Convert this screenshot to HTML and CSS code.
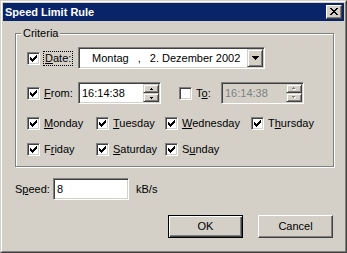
FILE: index.html
```html
<!DOCTYPE html>
<html>
<head>
<meta charset="utf-8">
<title>Speed Limit Rule</title>
<link rel="stylesheet" href="styles.css">
</head>
<body>
<div class="window">
  <div class="frame">
    <div class="titlebar">
      <span class="title">Speed Limit Rule</span>
      <span class="close"><svg class="xglyph" width="8" height="7" viewBox="0 0 8 7"><path d="M0 0h2v1h-2z M6 0h2v1h-2z M1 1h2v1h-2z M5 1h2v1h-2z M2 2h4v1h-4z M3 3h2v1h-2z M2 4h4v1h-4z M1 5h2v1h-2z M5 5h2v1h-2z M0 6h2v1h-2z M6 6h2v1h-2z"/></svg></span>
    </div>
    <div class="body">
      <div class="group">
        <span class="legend">Criteria</span>
        <div class="row">
          <div class="opt opt-label">
            <span class="box"><svg class="check" width="7" height="7" viewBox="0 0 7 7"><path d="M0 2V5H1V6H2V7H3V6H4V5H5V4H6V3H7V0H6V1H5V2H4V3H3V4H2V3H1V2Z"/></svg></span>
            <span class="lbl focus"><u>D</u>ate:</span>
          </div>
          <div class="combo">
            <span class="combo-text"><span>Montag</span><span class="comma">,</span><span class="date">2. Dezember 2002</span></span>
            <span class="raised drop"><svg width="7" height="4" viewBox="0 0 7 4"><path d="M0 0h7v1h-7z M1 1h5v1h-5z M2 2h3v1h-3z M3 3h1v1h-1z"/></svg></span>
          </div>
        </div>
        <div class="row row-time">
          <div class="opt opt-label">
            <span class="box"><svg class="check" width="7" height="7" viewBox="0 0 7 7"><path d="M0 2V5H1V6H2V7H3V6H4V5H5V4H6V3H7V0H6V1H5V2H4V3H3V4H2V3H1V2Z"/></svg></span>
            <span class="lbl"><u>F</u>rom:</span>
          </div>
          <div class="field time">
            <span class="val">16:14:38</span>
            <span class="spin">
              <span class="raised sb"><svg width="3" height="2" viewBox="0 0 3 2"><path d="M1 0h1v1h-1z M0 1h3v1h-3z"/></svg></span>
              <span class="raised sb"><svg width="3" height="2" viewBox="0 0 3 2"><path d="M0 0h3v1h-3z M1 1h1v1h-1z"/></svg></span>
            </span>
          </div>
          <div class="opt opt-to">
            <span class="box"></span>
            <span class="lbl">T<u>o</u>:</span>
          </div>
          <div class="field time disabled">
            <span class="val">16:14:38</span>
            <span class="spin">
              <span class="raised sb"><svg width="4" height="3" viewBox="0 0 4 3"><path class="hl" d="M2 1h1v1h-1z M1 2h3v1h-3z"/><path class="sh" d="M1 0h1v1h-1z M0 1h3v1h-3z"/></svg></span>
              <span class="raised sb"><svg width="4" height="3" viewBox="0 0 4 3"><path class="hl" d="M1 1h3v1h-3z M2 2h1v1h-1z"/><path class="sh" d="M0 0h3v1h-3z M1 1h1v1h-1z"/></svg></span>
            </span>
          </div>
        </div>
        <div class="days">
          <div class="opt"><span class="box"><svg class="check" width="7" height="7" viewBox="0 0 7 7"><path d="M0 2V5H1V6H2V7H3V6H4V5H5V4H6V3H7V0H6V1H5V2H4V3H3V4H2V3H1V2Z"/></svg></span><span class="lbl"><u>M</u>onday</span></div>
          <div class="opt"><span class="box"><svg class="check" width="7" height="7" viewBox="0 0 7 7"><path d="M0 2V5H1V6H2V7H3V6H4V5H5V4H6V3H7V0H6V1H5V2H4V3H3V4H2V3H1V2Z"/></svg></span><span class="lbl"><u>T</u>uesday</span></div>
          <div class="opt"><span class="box"><svg class="check" width="7" height="7" viewBox="0 0 7 7"><path d="M0 2V5H1V6H2V7H3V6H4V5H5V4H6V3H7V0H6V1H5V2H4V3H3V4H2V3H1V2Z"/></svg></span><span class="lbl"><u>W</u>ednesday</span></div>
          <div class="opt"><span class="box"><svg class="check" width="7" height="7" viewBox="0 0 7 7"><path d="M0 2V5H1V6H2V7H3V6H4V5H5V4H6V3H7V0H6V1H5V2H4V3H3V4H2V3H1V2Z"/></svg></span><span class="lbl">T<u>h</u>ursday</span></div>
          <div class="opt"><span class="box"><svg class="check" width="7" height="7" viewBox="0 0 7 7"><path d="M0 2V5H1V6H2V7H3V6H4V5H5V4H6V3H7V0H6V1H5V2H4V3H3V4H2V3H1V2Z"/></svg></span><span class="lbl">F<u>r</u>iday</span></div>
          <div class="opt"><span class="box"><svg class="check" width="7" height="7" viewBox="0 0 7 7"><path d="M0 2V5H1V6H2V7H3V6H4V5H5V4H6V3H7V0H6V1H5V2H4V3H3V4H2V3H1V2Z"/></svg></span><span class="lbl"><u>S</u>aturday</span></div>
          <div class="opt"><span class="box"><svg class="check" width="7" height="7" viewBox="0 0 7 7"><path d="M0 2V5H1V6H2V7H3V6H4V5H5V4H6V3H7V0H6V1H5V2H4V3H3V4H2V3H1V2Z"/></svg></span><span class="lbl">S<u>u</u>nday</span></div>
        </div>
      </div>
      <div class="speed-row">
        <span class="speed-lbl">S<u>p</u>eed:</span>
        <div class="field speed"><span>8</span></div>
        <span class="unit">kB/s</span>
      </div>
      <div class="buttons">
        <button class="btn default">OK</button>
        <button class="btn">Cancel</button>
      </div>
    </div>
  </div>
</div>
</body>
</html>
```
FILE: styles.css
```css
* { box-sizing: border-box; }
html, body { margin: 0; padding: 0; }
body {
  background: #D4D0C8;
  font-family: "Liberation Sans", Arial, sans-serif;
  font-size: 11px;
  line-height: 13px;
  color: #000;
  width: 347px;
  height: 253px;
  overflow: hidden;
}
svg { display: block; shape-rendering: crispEdges; }
svg path { fill: #000; }
u { text-decoration: underline; text-underline-offset: 1px; }

.window {
  width: 347px;
  height: 253px;
  border: 1px solid;
  border-color: #D4D0C8 #404040 #404040 #D4D0C8;
}
.frame {
  height: 100%;
  border: 1px solid;
  border-color: #fff #808080 #808080 #fff;
  padding: 1px;
  display: flex;
  flex-direction: column;
}
.titlebar {
  flex: none;
  height: 18px;
  background: #0A246A;
  display: flex;
  align-items: center;
  justify-content: space-between;
  padding: 0 2px;
}
.title { color: #fff; font-weight: bold; }
.close {
  width: 16px;
  height: 14px;
  background: #D4D0C8;
  border: 1px solid;
  border-color: #fff #404040 #404040 #fff;
  box-shadow: inset -1px -1px #808080;
  padding: 2px 0 0 3px;
}

.body {
  flex: 1;
  padding: 12px 10px 0 12px;
  display: flex;
  flex-direction: column;
}

.group {
  position: relative;
  border: 1px solid #808080;
  box-shadow: inset 1px 1px #fff, 1px 1px #fff;
  padding: 13px 0 10px 11px;
}
.legend {
  position: absolute;
  left: 5px;
  top: -7px;
  padding: 0 2px;
  background: #D4D0C8;
}

.row { display: flex; align-items: center; height: 22px; }
.row-time { margin-top: 13px; }
.opt { display: flex; align-items: center; height: 13px; }
.opt-label { width: 51px; }
.opt-to { width: 42px; margin-left: 18px; }

.box {
  flex: none;
  width: 13px;
  height: 13px;
  background: #fff;
  border: 1px solid;
  border-color: #808080 #fff #fff #808080;
  box-shadow: inset 1px 1px #404040, inset -1px -1px #D4D0C8;
  padding: 2px;
}
.lbl { margin-left: 4px; white-space: nowrap; }
.lbl.focus { margin-left: 3px; border: 1px dotted #000; padding: 0 1px; }

.field, .combo {
  background: #fff;
  border: 1px solid;
  border-color: #808080 #fff #fff #808080;
  box-shadow: inset 1px 1px #404040, inset -1px -1px #D4D0C8;
  height: 22px;
}
.raised {
  background: #D4D0C8;
  border: 1px solid;
  border-color: #D4D0C8 #404040 #404040 #D4D0C8;
  box-shadow: inset 1px 1px #fff, inset -1px -1px #808080;
  display: flex;
  align-items: center;
  justify-content: center;
}

.combo {
  width: 187px;
  padding: 1px;
  display: flex;
  align-items: center;
  justify-content: space-between;
}
.combo-text { padding-left: 12px; white-space: nowrap; display: flex; }
.comma { margin-left: 9px; }
.date { margin-left: 9px; }
.drop { width: 16px; height: 18px; }

.time {
  width: 83px;
  padding: 1px;
  display: flex;
  align-items: center;
  justify-content: space-between;
}
.val { padding-left: 2px; }
.spin { width: 16px; height: 18px; display: flex; flex-direction: column; }
.sb { flex: 1; }
.disabled { background: #D4D0C8; color: #808080; }
.disabled svg .sh { fill: #808080; }
.disabled svg .hl { fill: #fff; }

.days {
  display: grid;
  grid-template-columns: 69px 69px 86px auto;
  row-gap: 13px;
  margin-top: 13px;
}

.speed-row {
  margin-top: 11px;
  display: flex;
  align-items: center;
  height: 22px;
}
.speed-lbl { width: 38px; }
.speed {
  width: 76px;
  padding: 0 0 0 3px;
  display: flex;
  align-items: center;
}
.unit { margin-left: 7px; }

.buttons {
  margin-top: 15px;
  display: flex;
  justify-content: flex-end;
  gap: 15px;
  padding-right: 1px;
}
.btn {
  width: 75px;
  height: 23px;
  padding: 0;
  font: inherit;
  color: #000;
  background: #D4D0C8;
  border: 1px solid;
  border-color: #fff #404040 #404040 #fff;
  box-shadow: inset -1px -1px #808080;
  border-radius: 0;
}
.btn.default {
  border-color: #000;
  box-shadow: inset 1px 1px #fff, inset -1px -1px #404040, inset -2px -2px #808080;
}
```
